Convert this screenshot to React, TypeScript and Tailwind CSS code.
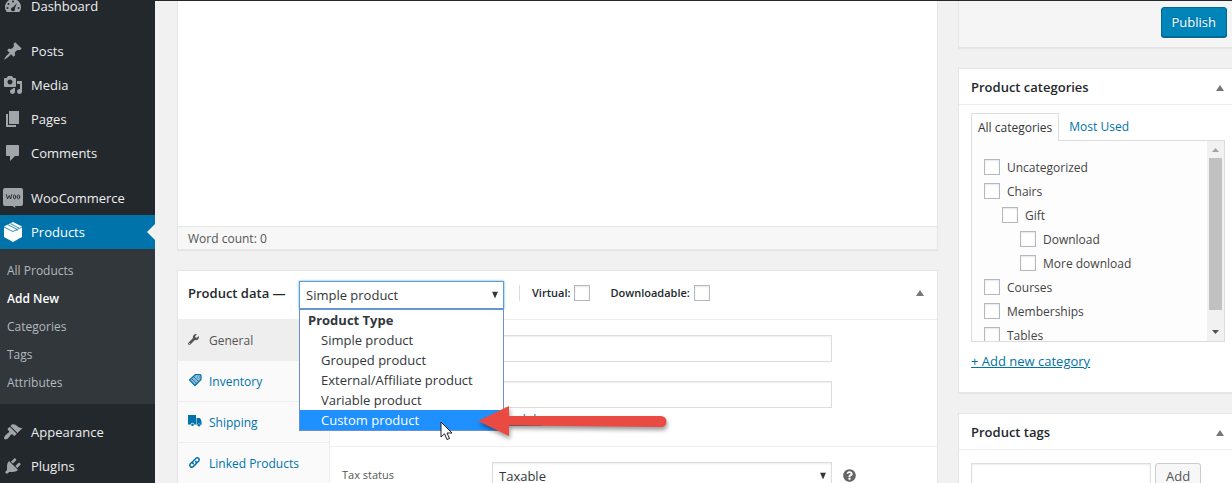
import React, { useState } from 'react';
import { FaQuestionCircle, FaWrench } from 'react-icons/fa';

interface MenuItem {
  label: string;
  icon: React.ReactNode;
}

interface Category {
  id: string;
  label: string;
  indent?: string;
}

const Icon: React.FC<{ children: React.ReactNode }> = ({ children }) => (
  <svg viewBox="0 0 20 20" className="h-5 w-5 shrink-0" fill="currentColor" fillRule="evenodd" aria-hidden="true">
    {children}
  </svg>
);

const topItems: MenuItem[] = [
  {
    label: 'Dashboard',
    icon: (
      <Icon>
        <path d="M3.76 16h12.48A7.98 7.98 0 0 0 18 11.05C18 6.61 14.42 3 10 3s-8 3.61-8 8.05c0 1.88.66 3.6 1.76 4.95zM10 4.500a1 1 0 1 1 0 2 1 1 0 0 1 0-2zM5.500 7a1 1 0 1 1 0 2 1 1 0 0 1 0-2zM14 7l-2.200 5.500a2 2 0 1 1-1.800-1.200zM4.500 11a1 1 0 1 1 0 2 1 1 0 0 1 0-2zM15.500 11a1 1 0 1 1 0 2 1 1 0 0 1 0-2z" />
      </Icon>
    ),
  },
];

const contentItems: MenuItem[] = [
  {
    label: 'Posts',
    icon: (
      <Icon>
        <path d="M10.44 3.02l1.82-1.82 6.36 6.35-1.83 1.82c-1.05-.68-2.48-.57-3.41.36l-.75.75c-.92.93-1.04 2.35-.35 3.41l-1.83 1.82-2.41-2.41-2.8 2.79c-.42.42-3.38 2.71-3.8 2.29s1.86-3.39 2.28-3.81l2.79-2.79L4.1 9.36l1.83-1.82c1.05.69 2.48.57 3.4-.36l.75-.75c.93-.92 1.05-2.35.36-3.41z" />
      </Icon>
    ),
  },
  {
    label: 'Media',
    icon: (
      <Icon>
        <path d="M13 11V4c0-.55-.45-1-1-1h-1.67L9 1H5L3.67 3H2c-.55 0-1 .45-1 1v7c0 .55.45 1 1 1h10c.55 0 1-.45 1-1zM7 4.5c1.38 0 2.5 1.12 2.5 2.5S8.38 9.5 7 9.5 4.5 8.38 4.5 7 5.62 4.5 7 4.5zM14 6h5v10.5c0 1.38-1.12 2.5-2.5 2.5S14 17.88 14 16.5s1.12-2.5 2.5-2.5c.17 0 .34.02.5.05V9h-3V6zm-4 8.05V13h2v3.5c0 1.38-1.12 2.5-2.5 2.5S7 17.88 7 16.5 8.12 14 9.5 14c.17 0 .34.02.5.05z" />
      </Icon>
    ),
  },
  {
    label: 'Pages',
    icon: (
      <Icon>
        <path d="M6 15V2h10v13H6zm-1 1h8v2H3V5h2v11z" />
      </Icon>
    ),
  },
  {
    label: 'Comments',
    icon: (
      <Icon>
        <path d="M4 2h11c.6 0 1 .4 1 1v9c0 .6-.4 1-1 1h-3l-5 5v-5H4c-.6 0-1-.4-1-1V3c0-.6.4-1 1-1z" />
      </Icon>
    ),
  },
];

const wooItem: MenuItem = {
  label: 'WooCommerce',
  icon: (
    <svg viewBox="0 0 20 20" className="h-5 w-5 shrink-0" aria-hidden="true">
      <path d="M2 0h16a2 2 0 0 1 2 2v14a2 2 0 0 1-2 2h-6l.5 2-3-2H2a2 2 0 0 1-2-2V2a2 2 0 0 1 2-2z" fill="#a0a5aa" />
      <g fill="none" stroke="#23282d" strokeWidth=".9" strokeLinecap="round" strokeLinejoin="round">
        <path d="M3.300 6.500l1.200 4.500L6.200 7.500 7.600 11 8.800 6.500" />
        <ellipse cx="11.600" cy="8.900" rx="1.200" ry="2" />
        <ellipse cx="15.500" cy="8.900" rx="1.200" ry="2" />
      </g>
    </svg>
  ),
};

const productsItem: MenuItem = {
  label: 'Products',
  icon: (
    <svg viewBox="0 0 20 20" className="h-5 w-5 shrink-0" aria-hidden="true">
      <path d="M10 0l9 4.500v10.500L10 20l-9-5V4.500z" fill="#fff" />
      <path d="M1 5l9 4.500L19 5M5 2.800l9 4.500v1.500M7.500 1.600l8.500 4.500" fill="none" stroke="#0073aa" strokeWidth=".8" />
    </svg>
  ),
};

const bottomItems: MenuItem[] = [
  {
    label: 'Appearance',
    icon: (
      <Icon>
        <path d="M14.48 11.06L7.41 3.99l1.5-1.5c.5-.56 2.3-.47 3.51.32 1.21.8 1.43 1.28 2.91 2.1 1.18.64 2.45 1.26 4.45.85zm-.71.71L6.7 4.7 4.93 6.47c-.39.39-.39 1.02 0 1.41l1.06 1.06c.39.39.39 1.03 0 1.42-.6.6-1.43 1.11-2.21 1.69-.35.26-.7.53-1.01.84C1.43 14.23.4 16.08 1.4 17.07c.99 1 2.84-.03 4.18-1.36.31-.31.58-.66.85-1.02.57-.78 1.08-1.61 1.69-2.21.39-.39 1.02-.39 1.41 0l1.06 1.06c.39.39 1.02.39 1.41 0z" />
      </Icon>
    ),
  },
  {
    label: 'Plugins',
    icon: (
      <Icon>
        <path d="M13.11 4.36L9.87 7.6 8 5.73l3.24-3.24c.35-.34 1.05-.2 1.56.32.52.51.66 1.21.31 1.55zm-8 1.77l.91-1.12 9.01 9.01-1.19.84c-.71.71-2.63 1.16-3.82 1.16H6.14L4.9 17.26c-.59.59-1.54.59-2.12 0-.59-.58-.59-1.53 0-2.12l1.24-1.24v-3.88c0-1.13.4-3.19 1.09-3.89zm7.26 3.97l3.24-3.24c.34-.35 1.04-.21 1.55.31.52.51.66 1.21.31 1.55l-3.24 3.25z" />
      </Icon>
    ),
  },
];

const subItems = ['All Products', 'Add New', 'Categories', 'Tags', 'Attributes'];

const productTypes = [
  'Simple product',
  'Grouped product',
  'External/Affiliate product',
  'Variable product',
  'Custom product',
];

const dataTabs: MenuItem[] = [
  { label: 'General', icon: <FaWrench size={11} /> },
  {
    label: 'Inventory',
    icon: (
      <svg viewBox="0 0 14 14" className="h-3.5 w-3.5" fill="none" stroke="currentColor" aria-hidden="true">
        <path d="M7.500 1.500h4.500l1 1v4L7 12.500 1.500 7z" fill="#8fb9d1" strokeWidth="1.200" strokeLinejoin="round" />
        <path d="M4 6l5 5M6 4l5 5" strokeWidth=".8" />
        <circle cx="10.500" cy="4" r="1" fill="#fafafa" strokeWidth=".6" />
      </svg>
    ),
  },
  {
    label: 'Shipping',
    icon: (
      <svg viewBox="0 0 14 12" className="h-3 w-3.5" fill="currentColor" aria-hidden="true">
        <path d="M0 0h8v9.500H6.200a1.700 1.700 0 0 0-3.400 0H0zM8.500 3h3.500l1.500 3v4h-1a1.600 1.600 0 0 0-3.200 0h-.8z" />
        <circle cx="4.500" cy="9.800" r="1.300" />
        <circle cx="10.900" cy="10.200" r="1.300" />
      </svg>
    ),
  },
  {
    label: 'Linked Products',
    icon: (
      <svg viewBox="0 0 13 13" className="h-[13px] w-[13px]" fill="none" stroke="currentColor" strokeWidth="1.500" strokeLinecap="round" aria-hidden="true">
        <path d="M5.300 7.700a2 2 0 0 1 0-2.800l2.700-2.700a2 2 0 0 1 2.800 2.800L9 6.800" />
        <path d="M7.700 5.300a2 2 0 0 1 0 2.800L5 10.800A2 2 0 0 1 2.200 8L4 6.200" />
      </svg>
    ),
  },
];

const categories: Category[] = [
  { id: 'uncategorized', label: 'Uncategorized' },
  { id: 'chairs', label: 'Chairs' },
  { id: 'gift', label: 'Gift', indent: 'ml-[18px]' },
  { id: 'download', label: 'Download', indent: 'ml-9' },
  { id: 'more-download', label: 'More download', indent: 'ml-9' },
  { id: 'courses', label: 'Courses' },
  { id: 'memberships', label: 'Memberships' },
  { id: 'tables', label: 'Tables' },
];

const checkboxClass =
  'h-4 w-4 shrink-0 appearance-none border border-[#b4b9be] bg-white shadow-[inset_0_1px_2px_rgba(0,0,0,0.1)] checked:bg-[#1e8cbe]';
const fieldClass = 'border border-[#ddd] bg-white text-[#32373c] shadow-[inset_0_1px_2px_rgba(0,0,0,0.07)] outline-none';
const boxClass = 'border border-[#e5e5e5] bg-white shadow-[0_1px_1px_rgba(0,0,0,0.04)]';

const MenuLink: React.FC<{ item: MenuItem }> = ({ item }) => (
  <a href="#" className="flex h-[34px] items-center gap-2 pl-[3px] text-[13px] text-[#eee]">
    <span className="text-[#a0a5aa]">{item.icon}</span>
    <span className="pt-0.5">{item.label}</span>
  </a>
);

const Toggle: React.FC<{ label: string }> = ({ label }) => (
  <button type="button" aria-label={label} className="text-[#72777c]">
    <svg viewBox="0 0 8 6" className="h-1.5 w-2" fill="currentColor" aria-hidden="true">
      <path d="M4 0l4 6H0z" />
    </svg>
  </button>
);

const Caret: React.FC = () => (
  <svg viewBox="0 0 6 7" className="pointer-events-none absolute top-1/2 right-1.5 h-[7px] w-1.5 -translate-y-1/2" fill="#32373c" aria-hidden="true">
    <path d="M0 0h6L3 7z" />
  </svg>
);

const AdminMenu: React.FC = () => (
  <nav className="w-[155px] shrink-0 bg-[#23282d]">
    <div className="-mt-[11px] flex flex-col gap-[11px]">
      <div>{topItems.map((item) => <MenuLink key={item.label} item={item} />)}</div>
      <div>{contentItems.map((item) => <MenuLink key={item.label} item={item} />)}</div>
      <div>
        <MenuLink item={wooItem} />
        <a href="#" className="relative flex h-[34px] items-center gap-2 bg-[#0073aa] pl-[3px] text-[13px] text-white">
          {productsItem.icon}
          <span className="pt-0.5">{productsItem.label}</span>
          <span className="absolute right-0 border-y-8 border-r-8 border-y-transparent border-r-[#f1f1f1]" />
        </a>
        <ul className="bg-[#32373c] pt-2 pb-[7px]">
          {subItems.map((label) => (
            <li key={label}>
              <a
                href="#"
                className={`flex h-7 items-center pl-[7px] text-[12px] ${label === 'Add New' ? 'font-semibold text-white' : 'text-[#b4b9be]'}`}
              >
                {label}
              </a>
            </li>
          ))}
        </ul>
      </div>
      <div>{bottomItems.map((item) => <MenuLink key={item.label} item={item} />)}</div>
    </div>
  </nav>
);

const ProductTypeSelect: React.FC = () => {
  const [type, setType] = useState('Simple product');

  return (
    <div className="relative w-[205px]">
      <select
        aria-label="Product Type"
        value={type}
        onChange={(e) => setType(e.target.value)}
        className="block h-7 w-full appearance-none border border-[#5b9dd9] bg-white px-1.5 pt-0.5 text-[13px] text-[#32373c] shadow-[0_0_2px_rgba(30,140,190,0.8)] outline-none"
      >
        {productTypes.map((name) => <option key={name}>{name}</option>)}
      </select>
      <Caret />
      <div className="absolute top-full right-0 left-0 z-10 border border-[#6c8fce] bg-white text-[13px] leading-5 text-[#32373c]">
        <div className="pl-2 font-bold">Product Type</div>
        <ul role="listbox" aria-label="Product types">
          {productTypes.map((name) => (
            <li
              key={name}
              role="option"
              aria-selected={name === 'Custom product'}
              onClick={() => setType(name)}
              className={`pl-[21px] ${name === 'Custom product' ? 'bg-[#1e90ff] text-white' : ''}`}
            >
              {name}
            </li>
          ))}
        </ul>
        {/* mouse pointer over the last option */}
        <svg viewBox="0 0 13 20" className="absolute right-[50px] -bottom-[11px] h-5 w-[13px]" aria-hidden="true">
          <path d="M1 1v15l3.500-3.200L7 18.500l2.500-1-2.500-5.500h5z" fill="#fff" stroke="#1c1c2c" strokeLinejoin="round" />
        </svg>
        {/* pointing arrow */}
        <svg viewBox="0 0 194 38" className="absolute -right-[164px] -bottom-[11px] h-[38px] w-[194px] overflow-visible drop-shadow-[1px_3px_2px_rgba(0,0,0,0.4)]" aria-hidden="true">
          <path d="M5 18L36 3v10h152a5.500 5.500 0 0 1 0 11L36 22.500V33z" fill="#e94b43" />
        </svg>
      </div>
    </div>
  );
};

const ProductData: React.FC = () => (
  <section className={boxClass}>
    <header className="flex h-[49px] items-start border-b border-[#eee] px-2.5 pt-2.5">
      <h2 className="w-[111px] text-[13px] leading-6 font-semibold text-[#23282d]">Product data —</h2>
      <ProductTypeSelect />
      <div className="mt-1 ml-[15px] flex h-4 items-center gap-5 border-l border-[#ddd] pl-3 text-[11px] font-semibold text-[#23282d]">
        <label className="flex items-center gap-1">
          Virtual:
          <input type="checkbox" className={checkboxClass} />
        </label>
        <label className="flex items-center gap-1">
          Downloadable:
          <input type="checkbox" className={checkboxClass} />
        </label>
      </div>
      <div className="ml-auto flex h-6 items-center pr-[3px]">
        <Toggle label="Toggle panel: Product data" />
      </div>
    </header>
    <div className="flex">
      <ul className="w-[152px] shrink-0 border-r border-[#eee] bg-[#fafafa]">
        {dataTabs.map((tab, i) => (
          <li key={tab.label}>
            <a
              href="#"
              className={`flex h-[41px] items-center border-b border-[#eee] pl-2.5 text-[12px] ${i === 0 ? 'bg-[#eee] text-[#555]' : 'text-[#0073aa]'}`}
            >
              <span className="w-[21px] pb-0.5">{tab.icon}</span>
              <span className="pt-0.5">{tab.label}</span>
            </a>
          </li>
        ))}
      </ul>
      <div className="min-w-0 flex-1 text-[12px]">
        <div className="flex h-[127px] flex-col items-start gap-[19px] border-b border-[#eee] pt-[15px] pr-[105px] pl-[162px]">
          <input type="text" aria-label="Regular price" className={`h-[27px] w-full ${fieldClass}`} />
          <input type="text" aria-label="Sale price" className={`h-[27px] w-full ${fieldClass}`} />
          <a href="#" className="-mt-4 text-[12px] text-[#0073aa] underline">Schedule</a>
        </div>
        <div className="flex items-center pt-[15px] pl-3">
          <label htmlFor="tax-status" className="w-[150px] shrink-0 pb-0.5 text-[11px] text-[#555]">Tax status</label>
          <div className="relative flex-1">
            <select id="tax-status" className={`block h-7 w-full appearance-none px-1.5 pt-0.5 text-[13px] ${fieldClass}`}>
              <option>Taxable</option>
            </select>
            <Caret />
          </div>
          <FaQuestionCircle size={13} className="mr-[81px] mb-0.5 ml-[11px] text-[#666]" />
        </div>
      </div>
    </div>
  </section>
);

const BoxHeader: React.FC<{ title: string }> = ({ title }) => (
  <header className="flex h-9 items-center justify-between border-b border-[#eee] pt-0.5 pr-2 pl-3">
    <h2 className="text-[13px] font-semibold text-[#23282d]">{title}</h2>
    <Toggle label={`Toggle panel: ${title}`} />
  </header>
);

const CategoriesBox: React.FC = () => (
  <section className={`border-r-0 ${boxClass}`}>
    <BoxHeader title="Product categories" />
    <div className="px-3 pt-2 pr-[7px] pb-[21px] text-[12px]">
      <div className="flex">
        <a href="#" className="relative -mb-px flex h-7 items-center border border-b-0 border-[#ddd] bg-[#fdfdfd] px-1.5 text-[#32373c]">
          All categories
        </a>
        <a href="#" className="flex h-[27px] items-center px-2.5 text-[#0073aa]">Most Used</a>
      </div>
      <div className="flex h-[202px] overflow-hidden border border-[#ddd] bg-[#fdfdfd]">
        <ul className="flex-1 pt-3.5 pl-3">
          {categories.map((cat) => (
            <li key={cat.id} className={cat.indent}>
              <label className="flex h-6 items-center gap-[7px] text-[#444]">
                <input type="checkbox" className={checkboxClass} />
                <span className="pt-0.5">{cat.label}</span>
              </label>
            </li>
          ))}
        </ul>
        <div className="flex w-[17px] flex-col items-center justify-between bg-[#f1f1f1]">
          <svg viewBox="0 0 17 17" className="h-[17px] w-[17px]" fill="#a3a3a3" aria-hidden="true">
            <path d="M5 11h7L8.500 7z" />
          </svg>
          <div className="mb-3.5 w-[13px] flex-1 bg-[#c1c1c1]" />
          <svg viewBox="0 0 17 17" className="h-[17px] w-[17px]" fill="#505050" aria-hidden="true">
            <path d="M5 6h7l-3.500 4z" />
          </svg>
        </div>
      </div>
      <a href="#" className="mt-2.5 inline-block text-[13px] leading-[18px] text-[#0073aa] underline">+ Add new category</a>
    </div>
  </section>
);

const TagsBox: React.FC = () => (
  <section className={`border-r-0 ${boxClass}`}>
    <BoxHeader title="Product tags" />
    <div className="flex gap-1 px-3 pt-[13px] pb-3">
      <input type="text" aria-label="Add new tag" className={`h-7 w-[180px] ${fieldClass}`} />
      <button type="button" className="h-7 rounded-[3px] border border-[#ccc] bg-[#f7f7f7] px-2.5 text-[13px] text-[#555] shadow-[0_1px_0_#ccc]">
        Add
      </button>
    </div>
  </section>
);

const App: React.FC = () => (
  <div className="flex h-screen overflow-hidden bg-[#f1f1f1] font-['Open_Sans',sans-serif]">
    <AdminMenu />
    <main className="flex min-w-0 flex-1 items-start gap-5 border-t border-[#23282d] pl-[22px]">
      <div className="flex min-w-0 flex-1 flex-col gap-5">
        <section className={`border-t-0 ${boxClass}`}>
          <textarea aria-label="Product description" className="block h-[225px] w-full resize-none outline-none" />
          <div className="flex h-[23px] items-center border-t border-[#e5e5e5] bg-[#f7f7f7] px-2.5 pt-0.5 text-[12px] text-[#555]">
            Word count: 0
          </div>
        </section>
        <ProductData />
      </div>
      <aside className="flex w-[274px] shrink-0 flex-col gap-5">
        <div className="flex h-[47px] justify-end border-b border-l border-[#e5e5e5] bg-[#f5f5f5] pt-1.5 pr-[5px] shadow-[0_1px_1px_rgba(0,0,0,0.04)]">
          <button type="button" className="h-[30px] rounded-[3px] border border-[#006799] bg-[#0085ba] px-2.5 pt-0.5 text-[13px] text-white shadow-[0_1px_0_#006799] [text-shadow:0_-1px_1px_#006799]">
            Publish
          </button>
        </div>
        <CategoriesBox />
        <TagsBox />
      </aside>
    </main>
  </div>
);

export default App;
